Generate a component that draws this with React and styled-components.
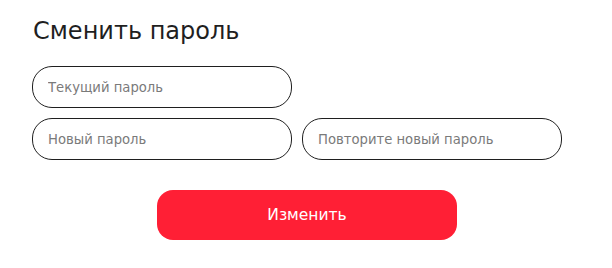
import React from 'react';
import styled, { createGlobalStyle } from 'styled-components';

const GlobalStyle = createGlobalStyle`
  body {
    margin: 0;
    background: #fff;
    font-family: 'DejaVu Sans', 'Noto Sans', sans-serif;
  }
`;

const Page = styled.div`
  width: 612px;
  box-sizing: border-box;
  padding: 16px 30px 0 32px;
`;

const Title = styled.h2`
  margin: 0 0 20px 1px;
  font-size: 24px;
  line-height: 30px;
  font-weight: 400;
  color: #1f1f1f;
`;

const Fields = styled.div`
  display: grid;
  grid-template-columns: 260px 260px;
  column-gap: 10px;
  row-gap: 10px;
`;

const Input = styled.input`
  box-sizing: border-box;
  width: 260px;
  height: 42px;
  padding: 0 15px;
  border: 1px solid #1f1f1f;
  border-radius: 20px;
  background: #fff;
  font-family: inherit;
  font-size: 13.2px;
  color: #333;
  outline: none;

  &::placeholder {
    color: #7a7a7a;
  }
`;

const Actions = styled.div`
  display: flex;
  justify-content: center;
  margin-top: 30px;
`;

const Button = styled.button`
  width: 300px;
  height: 50px;
  border: none;
  border-radius: 16px;
  background: #ff1f35;
  color: #fff;
  font-family: inherit;
  font-size: 15.5px;
  cursor: pointer;
`;

export default function App() {
  return (
    <>
      <GlobalStyle />
      <Page>
        <Title>Сменить пароль</Title>
        <Fields>
          <Input type="password" placeholder="Текущий пароль" />
          <div />
          <Input type="password" placeholder="Новый пароль" />
          <Input type="password" placeholder="Повторите новый пароль" />
        </Fields>
        <Actions>
          <Button>Изменить</Button>
        </Actions>
      </Page>
    </>
  );
}
